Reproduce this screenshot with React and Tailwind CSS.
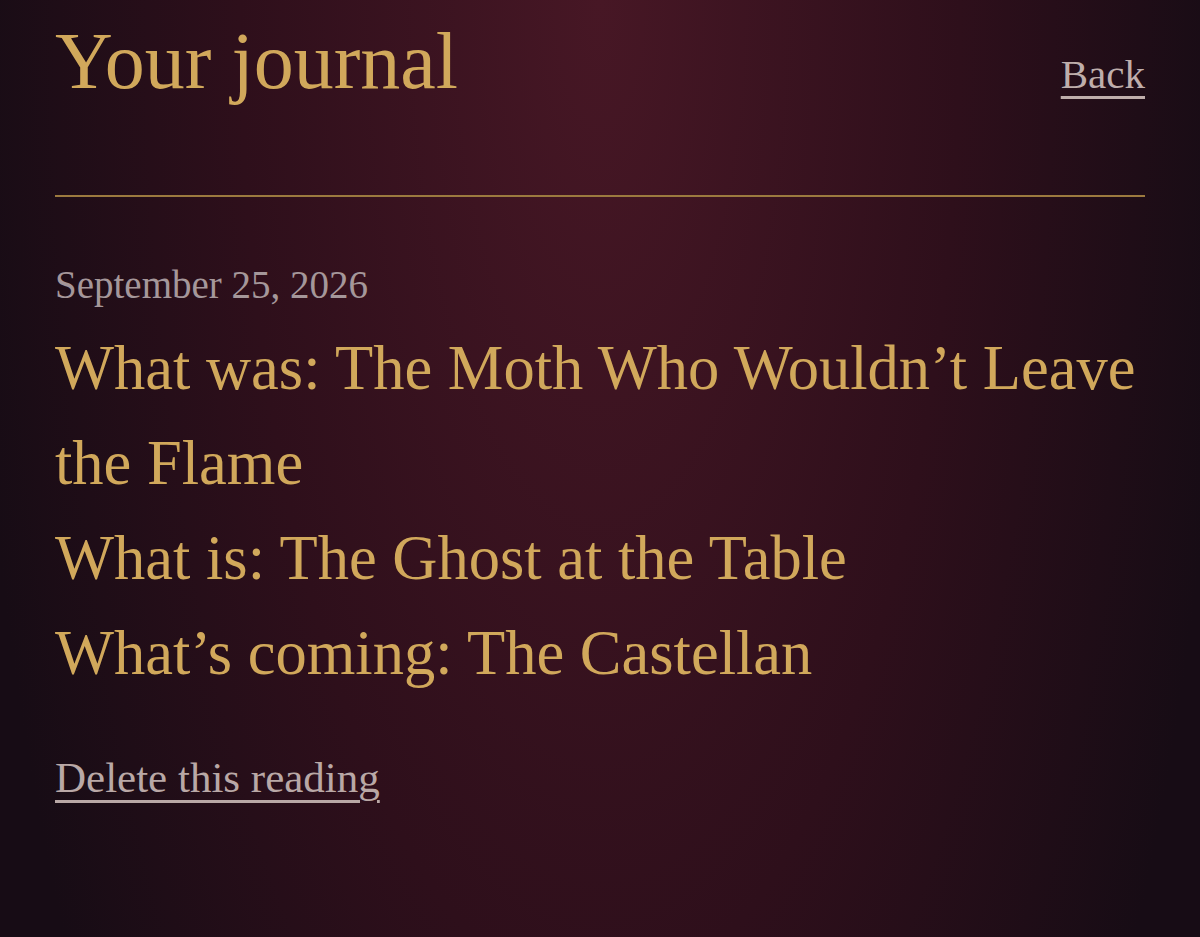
export default function App() {
  return (
    <div className="min-h-[937px] w-full bg-[radial-gradient(ellipse_720px_2000px_at_50%_0%,#471725_0%,#2e0f1b_50%,#170c15_88%)] px-[55px] font-['Liberation_Serif',serif]">
      <header className="flex items-baseline justify-between pt-[21px]">
        <h1 className="text-[80px] leading-none font-normal text-[#d1a85b]">Your journal</h1>
        <a href="#" className="text-[41px] leading-none text-[#bfaeab] underline decoration-[3px] underline-offset-[8px]">Back</a>
      </header>
      <div className="mt-[94px] h-[2px] bg-[#9c7a3f]" />
      <p className="mt-[68px] text-[39px] leading-none text-[#a5979a]">September 25, 2026</p>
      <div className="mt-[17px] text-[62.5px] leading-[95px] text-[#d1a85b]">
        <p>What was: The Moth Who Wouldn’t Leave the Flame</p>
        <p>What is: The Ghost at the Table</p>
        <p>What’s coming: The Castellan</p>
      </div>
      <a href="#" className="mt-[55px] inline-block text-[43px] leading-none text-[#b9a8a6] underline decoration-[3px] underline-offset-[8px]">Delete this reading</a>
    </div>
  );
}
